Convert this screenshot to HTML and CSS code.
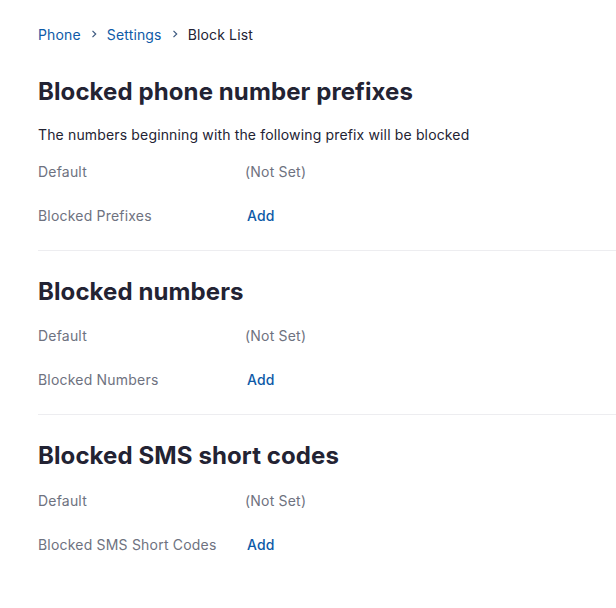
FILE: index.html
```html
<!DOCTYPE html>
<html>
<head>
<meta charset="utf-8">
<link rel="stylesheet" href="styles.css">
</head>
<body>
<div class="page">
  <nav class="crumbs">
    <a class="crumb-link">Phone</a>
    <svg class="chev" width="8" height="10" viewBox="0 0 8 10"><path d="M2.5 1.8 L5.7 5 L2.5 8.2" fill="none" stroke="#3d5a80" stroke-width="1.2"/></svg>
    <a class="crumb-link">Settings</a>
    <svg class="chev" width="8" height="10" viewBox="0 0 8 10"><path d="M2.5 1.8 L5.7 5 L2.5 8.2" fill="none" stroke="#3d5a80" stroke-width="1.2"/></svg>
    <span class="crumb-current">Block List</span>
  </nav>

  <section class="section">
    <h2 class="title">Blocked phone number prefixes</h2>
    <p class="desc">The numbers beginning with the following prefix will be blocked</p>
    <div class="rows">
      <div class="row"><span class="label">Default</span><span class="value">(Not Set)</span></div>
      <div class="row"><span class="label">Blocked Prefixes</span><a class="add">Add</a></div>
    </div>
  </section>

  <section class="section">
    <h2 class="title">Blocked numbers</h2>
    <div class="rows">
      <div class="row"><span class="label">Default</span><span class="value">(Not Set)</span></div>
      <div class="row"><span class="label">Blocked Numbers</span><a class="add">Add</a></div>
    </div>
  </section>

  <section class="section last">
    <h2 class="title">Blocked SMS short codes</h2>
    <div class="rows">
      <div class="row"><span class="label">Default</span><span class="value">(Not Set)</span></div>
      <div class="row"><span class="label">Blocked SMS Short Codes</span><a class="add">Add</a></div>
    </div>
  </section>
</div>
</body>
</html>
```

FILE: styles.css
```css
html, body {
  margin: 0;
  padding: 0;
  background: #ffffff;
}
body {
  font-family: Inter, "Noto Sans", sans-serif;
  color: #232333;
}
.page {
  padding: 24px 0 0 38px;
}
.crumbs {
  display: flex;
  align-items: center;
  gap: 9px;
  font-size: 14px;
  letter-spacing: 0.15px;
  height: 20px;
  margin-bottom: 7px;
}
.crumb-link {
  color: #0e5aa7;
}
.crumb-current {
  color: #232333;
}
.chev {
  display: block;
}
.section {
  border-bottom: 1px solid #ededf0;
  padding: 23px 0 12.5px;
}
.section.last {
  border-bottom: none;
}
.title {
  margin: 0;
  font-size: 24px;
  font-weight: 700;
  letter-spacing: 0.1px;
  line-height: 36px;
  color: #232333;
}
.desc {
  margin: 15px 0 1px;
  font-size: 14px;
  letter-spacing: 0.15px;
  line-height: 20px;
  color: #232333;
}
.rows {
  margin-top: 4px;
}
.row {
  display: flex;
  align-items: center;
  height: 44px;
  font-size: 14px;
  letter-spacing: 0.2px;
}
.label {
  width: 207px;
  color: #6e7280;
  flex: none;
}
.value {
  color: #6e7280;
}
.add {
  color: #0e5aa7;
  font-weight: 500;
  padding-left: 2px;
}
```
